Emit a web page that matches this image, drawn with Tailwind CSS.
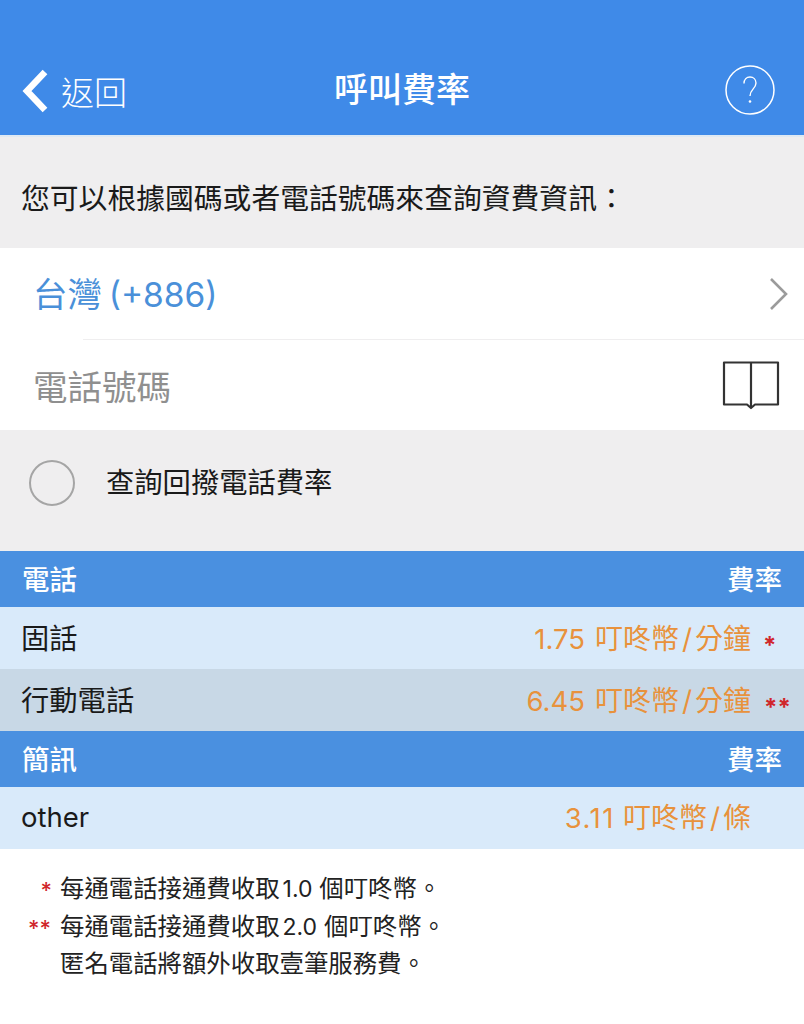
<!DOCTYPE html>
<html lang="zh-Hant">
<head>
  <meta charset="UTF-8">
  <meta name="viewport" content="width=device-width, initial-scale=1.0">
  <title>呼叫費率</title>
  <script src="https://cdn.jsdelivr.net/npm/@tailwindcss/browser@4"></script>
</head>
<body class="bg-white min-h-screen font-['Inter','Noto_Sans_CJK_TC',sans-serif] text-[#1a1a1a]">
  <!-- Header -->
  <header class="h-[137px] bg-[#3f8ae8] border-b-2 border-[#dfe9f3] relative flex items-end pb-[12px] text-white">
    <div class="flex items-center pl-[21px] gap-[12px] h-[60px] w-full">
      <svg width="28" height="44" viewBox="0 0 28 44" fill="none" class="mt-[-5px]"><path d="M24 3 L6 22 L24 41" stroke="#fff" stroke-width="6.5"/></svg>
      <span class="text-[33px] font-light mt-[2px]">返回</span>
    </div>
    <div class="absolute left-0 right-0 top-[67px] text-center text-[34px] leading-[46px] font-medium">呼叫費率</div>
    <svg class="absolute left-[725px] top-[65px]" width="50" height="50" viewBox="0 0 50 50" fill="none">
      <circle cx="25" cy="25" r="24" stroke="#fff" stroke-width="1.5"/>
      <path d="M19 18.5c0-4 2.6-6.5 6-6.5s6 2.4 6 6c0 5.6-6 6.4-6 13" stroke="#fff" stroke-width="1.4"/>
      <circle cx="25" cy="36.5" r="1.3" fill="#fff"/>
    </svg>
  </header>

  <!-- Intro -->
  <div class="h-[111px] bg-[#efeeef] flex items-center pl-[21px] pt-[13px] text-[28.8px]">您可以根據國碼或者電話號碼來查詢資費資訊：</div>

  <!-- Inputs -->
  <div class="bg-white">
    <div class="h-[91px] pl-[33px] pr-[14px] flex items-center justify-between">
      <span class="text-[34.5px] text-[#4a90d9] mt-[3px]">台灣 <span class="text-[33.5px] ml-[-3px]">(+886)</span></span>
      <svg width="22" height="34" viewBox="0 0 22 34" fill="none" class="ml-[2px]"><path d="M3 2 L18 17 L3 32" stroke="#9b9b9b" stroke-width="2.6"/></svg>
    </div>
    <div class="h-[91px] ml-[83px] border-t border-[#efeeef] flex items-center justify-end pr-[24px] relative">
      <span class="absolute left-[-50px] top-[22px] text-[34.5px] text-[#8f8f8f]">電話號碼</span>
      <svg width="58" height="50" viewBox="0 0 58 50" fill="none" stroke="#333" stroke-width="2.2" stroke-linejoin="round">
        <path d="M2 2.5 H56 V44.5 H33 L29 48 L25 44.5 H2 Z"/>
        <path d="M29 2.5 V47"/>
      </svg>
    </div>
  </div>

  <!-- Callback option -->
  <div class="h-[121px] bg-[#efeeef] flex items-center pl-[29px] pb-[15px]">
    <span class="w-[46px] h-[46px] rounded-full border-2 border-[#a5a5a5]"></span>
    <span class="ml-[31px] text-[28.3px]">查詢回撥電話費率</span>
  </div>

  <!-- Rates -->
  <div class="h-[56px] bg-[#4a90e0] text-white flex items-center justify-between pl-[22px] pr-[22px] pt-[3px] text-[27.5px] font-medium">
    <span>電話</span><span>費率</span>
  </div>
  <div class="h-[62px] bg-[#d9eafa] flex items-center pl-[21px] pt-[2px] text-[28.3px]">
    <span>固話</span>
    <span class="ml-auto text-[28px] text-[#e8923c]"><span class="text-[27.5px] mr-[2px]">1.75</span> 叮咚幣<span class="mx-[3px]">/</span>分鐘</span>
    <span class="w-[53px] pl-[12px] text-[#d0262b] text-[24px] leading-none font-bold mt-[14px]">*</span>
  </div>
  <div class="h-[62px] bg-[#c8d8e6] flex items-center pl-[21px] pt-[2px] text-[28.3px]">
    <span>行動電話</span>
    <span class="ml-auto text-[28px] text-[#e8923c]"><span class="text-[27.5px] mr-[2px]">6.45</span> 叮咚幣<span class="mx-[3px]">/</span>分鐘</span>
    <span class="w-[53px] pl-[13px] text-[#d0262b] text-[24px] leading-none font-bold mt-[14px]">**</span>
  </div>
  <div class="h-[56px] bg-[#4a90e0] text-white flex items-center justify-between pl-[22px] pr-[22px] pt-[3px] text-[27.5px] font-medium">
    <span>簡訊</span><span>費率</span>
  </div>
  <div class="h-[62px] bg-[#d9eafa] flex items-center pl-[21px] text-[27.5px]">
    <span>other</span>
    <span class="ml-auto mr-[53px] text-[28px] text-[#e8923c]"><span class="text-[27.5px] tracking-[1.5px]">3.11</span> 叮咚幣<span class="mx-[3px]">/</span>條</span>
  </div>

  <!-- Notes -->
  <div class="pt-[21px] text-[24.4px] leading-[37.5px] text-[#222]">
    <div class="flex h-[37.5px]"><span class="w-[52px] text-right text-[#d0262b] text-[22px] font-medium mt-[2px]">*</span><span class="ml-[8px]">每通電話接通費收取<span class="text-[23px] ml-[3px]">1.0</span> 個叮咚幣。</span></div>
    <div class="flex h-[37.5px]"><span class="w-[51px] text-right text-[#d0262b] text-[22px] font-medium mt-[2px]">**</span><span class="ml-[9px]">每通電話接通費收取<span class="text-[23px] ml-[3px]">2.0</span> 個叮咚幣。</span></div>
    <div class="pl-[60px] h-[37.5px]">匿名電話將額外收取壹筆服務費。</div>
  </div>
</body>
</html>
